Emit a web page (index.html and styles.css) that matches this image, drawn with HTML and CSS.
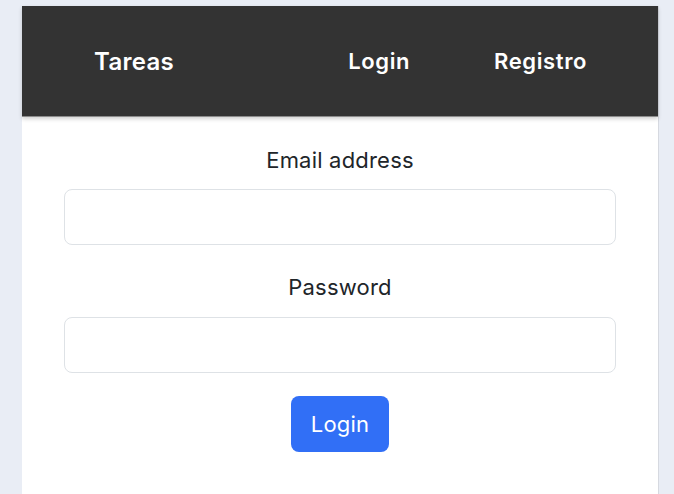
FILE: index.html
```html
<!DOCTYPE html>
<html lang="es">
<head>
<meta charset="utf-8">
<title>Tareas - Login</title>
<link rel="stylesheet" href="styles.css">
</head>
<body>
<div class="card">
  <header class="navbar">
    <a class="brand" href="#">Tareas</a>
    <nav class="links">
      <a href="#">Login</a>
      <a href="#">Registro</a>
    </nav>
  </header>
  <form class="form">
    <label class="label" for="email">Email address</label>
    <input class="input" id="email" type="email">
    <label class="label gap" for="password">Password</label>
    <input class="input" id="password" type="password">
    <button class="btn" type="button">Login</button>
  </form>
</div>
</body>
</html>
```

FILE: styles.css
```css
html, body {
  margin: 0;
  padding: 0;
}
body {
  background: #e9edf5;
  font-family: Inter, "Noto Sans", "Liberation Sans", sans-serif;
  padding: 6px 15px 0 22px;
  height: 494px;
  box-sizing: border-box;
  overflow: hidden;
}
.card {
  background: #ffffff;
  border-right: 1px solid #d6d9e0;
  height: 600px;
}
.navbar {
  background: #333333;
  height: 110px;
  display: flex;
  align-items: center;
  justify-content: space-between;
  padding: 0 71px 0 72px;
  border-bottom: 1px solid #8c8c8c;
  box-shadow: 0 2px 4px rgba(0, 0, 0, 0.18);
  position: relative;
}
.navbar a {
  color: #ffffff;
  text-decoration: none;
  font-weight: 600;
}
.brand {
  font-size: 24px;
  letter-spacing: 0.3px;
}
.links {
  display: flex;
  gap: 84px;
  font-size: 22px;
  letter-spacing: 0.6px;
}
.form {
  display: flex;
  flex-direction: column;
  align-items: center;
  padding: 28px 42px 0 42px;
}
.label {
  font-size: 22px;
  line-height: 30px;
  color: #212529;
  margin-bottom: 14px;
  letter-spacing: 0.2px;
}
.label.gap {
  margin-top: 27px;
  margin-bottom: 15px;
}
.input {
  width: 100%;
  height: 56px;
  box-sizing: border-box;
  border: 1px solid #dee2e6;
  border-radius: 8px;
  background: #fff;
  font-size: 20px;
  padding: 0 14px;
}
.btn {
  margin-top: 23px;
  background: #316ff6;
  color: #fff;
  border: none;
  border-radius: 8px;
  height: 56px;
  padding: 0 20px;
  font-family: inherit;
  font-size: 22px;
  letter-spacing: 0.2px;
}
```
